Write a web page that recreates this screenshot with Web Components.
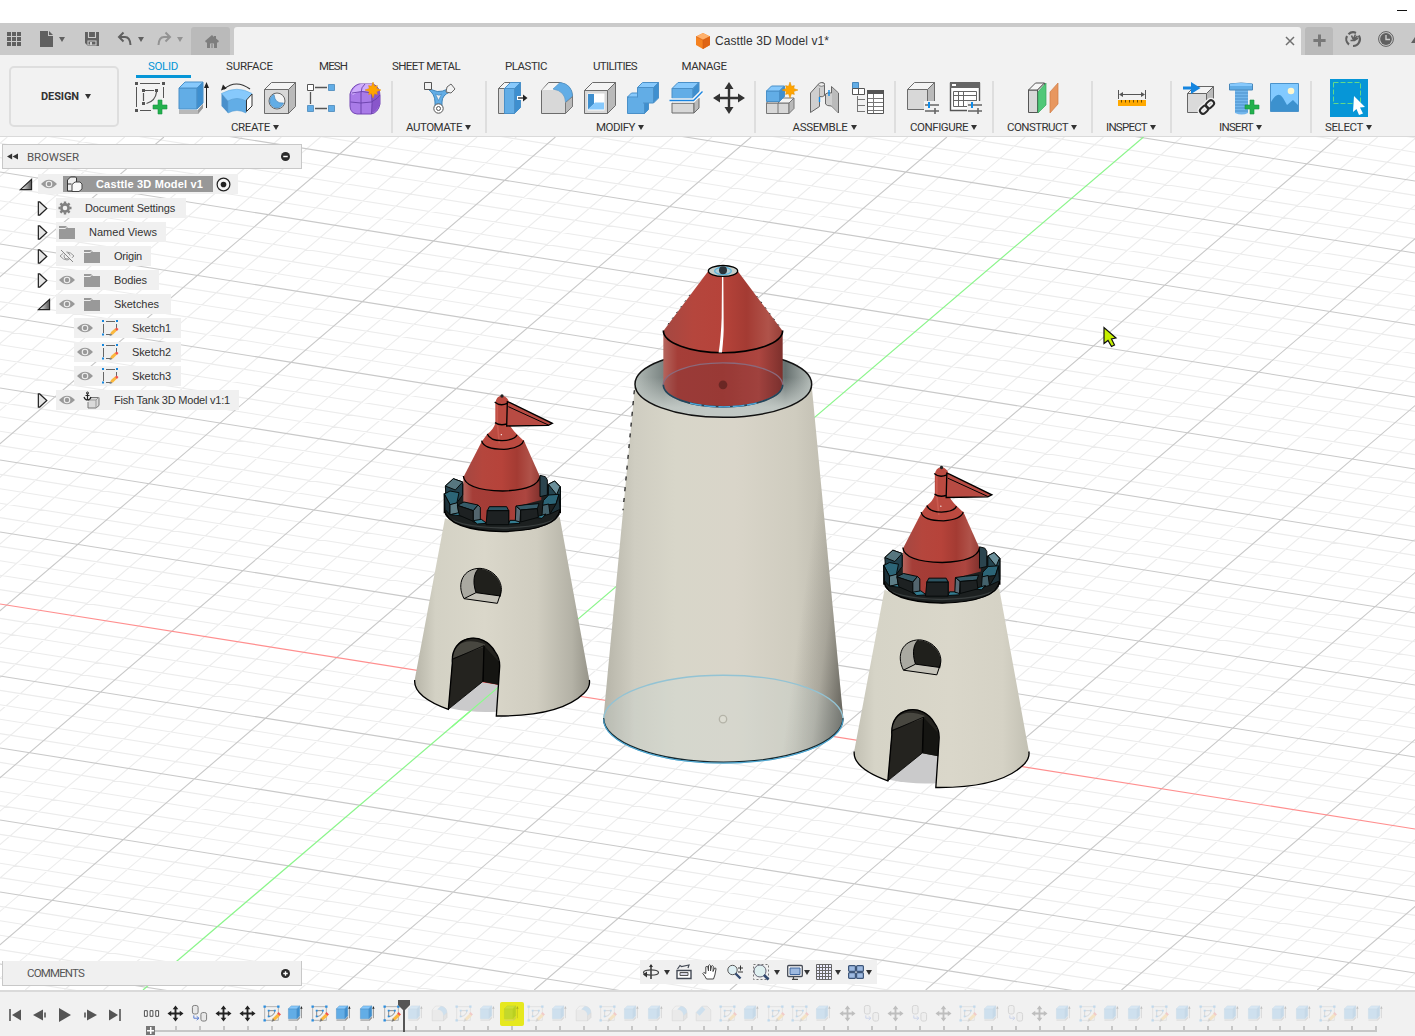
<!DOCTYPE html>
<html lang="en">
<head>
<meta charset="utf-8">
<title>Casttle 3D Model v1*</title>
<style>
html,body{margin:0;height:100%;overflow:hidden;background:#fff}
body{font-family:"Liberation Sans",Arial,sans-serif;font-size:11px;color:#333}
</style>
</head>
<body>
<cad-app></cad-app>
<script>
const cube = (x,y,w,h,d,f,t,s,o='none') => `<g stroke="${o}" stroke-linejoin="round"><path d="M${x} ${y+d}h${w-d}v${h-d}h${d-w}z" fill="${f}"/><path d="M${x} ${y+d}l${d} ${-d}h${w-d}l${-d} ${d}z" fill="${t}"/><path d="M${x+w-d} ${y+d}l${d} ${-d}v${h-d}l${-d} ${d}z" fill="${s}"/></g>`;
const plus = (x,y)=>`<path d="M${x-2} ${y-7}h4v5h5v4h-5v5h-4v-5h-5v-4h5z" fill="#23b14d" stroke="#149040" stroke-width=".6"/>`;
const star = (x,y,r)=>{let p='';for(let i=0;i<16;i++){const a=i*Math.PI/8,q=i%2?r*.5:(i%4?r*.78:r);p+=(x+q*Math.sin(a)).toFixed(1)+','+(y-q*Math.cos(a)).toFixed(1)+' ';}return `<polygon points="${p}" fill="#ffa400" stroke="#e08e00" stroke-width=".5"/>`;};
const sliders = (x,y)=>`<path d="M${x-1} ${y-4}h16v13h-16z" fill="#f2f2f2"/><path d="M${x} ${y}h14M${x} ${y+6}h14M${x+10} ${y+3}v6" stroke="#666" stroke-width="1.6"/><path d="M${x+4} ${y-3}v6" stroke="#0d8cea" stroke-width="2"/>`;
const move = `<path d="M18 2l4.500 7h-3.300v7.800H27v-3.300l7 4.500-7 4.500v-3.300h-7.800V27h3.300L18 34l-4.500-7h3.300v-7.800H9v3.300L2 18l7-4.500v3.300h7.800V9h-3.300z" fill="#333"/>`;
const ICONS = {
 sketch:`<path d="M7 3.500h20M3.500 7v20M7 30.500h11M30.500 7v11" stroke="#555" fill="none"/><g fill="#555"><path d="M2 2h3v3H2zM29 2h3v3h-3zM2 29h3v3H2zM9 9h3v3H9zM22 9h3v3h-3zM9 22h3v3H9z"/></g><path d="M12 10.500h9M10.500 13v8M23.500 12q-1 9-10 11.500" stroke="#555" stroke-width="1.200" fill="none"/>${plus(27,27)}`,
 extrude:`<path d="M3 30h19l5-6v4l-5 6H3z" fill="#b9b9b9"/><path d="M22 30l5-6v4l-5 6z" fill="#999"/>${cube(3,2,24,27,6,'#62ade6','#87c9fc','#3e8fcf','#4a90c8')}<path d="M30.500 7v21" stroke="#222"/><path d="M28 8l2.500-6 2.500 6z" fill="#222"/>`,
 revolve:`<path d="M2.500 13.500Q18 5 33 13.500l-6 7.500q-9-4-18 0z" fill="#87c9fc" stroke="#5fabe0" stroke-width=".6"/><path d="M2.500 13.500L9 21v12l-6.500-7z" fill="#4a90cb"/><path d="M9 21q9-5 18 0v12q-9-5-18 0z" fill="#62ade6" stroke="#5a9fd5" stroke-width=".6"/><path d="M27.500 20l5.500-6v12l-5.500 5.500z" fill="#fff" stroke="#333"/><path d="M5 9Q17-1 31 9" fill="none" stroke="#333" stroke-width="1.200"/><path d="M2 10.500l2-6 3.500 4z" fill="#222"/>`,
 hole:`${cube(2.5,2.5,31,31,7,'#d8d8d8','#f4f4f4','#bababa','#6c6c6c')}<circle cx="15" cy="21" r="8" fill="#f4f4f4" stroke="#666"/><path d="M12 14.500q1 9.500 9.500 8.500a7 7 0 1 1-9.500-8.500z" fill="#62ade6" stroke="#4887ba" stroke-width=".7"/>`,
 pattern:`<path d="M10 7.500h12M5.500 12v12M10 28.500h12" stroke="#555" stroke-width="1.300"/><path d="M2.500 4.500h6v6h-6z" fill="#fff" stroke="#555"/><path d="M23.500 4.500h6v6h-6zM2.500 25.500h6v6h-6zM23.500 25.500h6v6h-6z" fill="#62ade6" stroke="#4887ba" stroke-width=".8"/>`,
 form:`<path d="M2 14Q4 6 11 4h14q7 3 7 12v8q-2 9-9 10H9q-7-1-7-8z" fill="#a97be8" stroke="#7447b5"/><path d="M3 13q4-8 10-9h11q3 3-1 8-10-3-18 3z" fill="#cfadfc"/><path d="M24 15q6-4 8-5v14q-3 7-8 9z" fill="#8956cb"/><path d="M2.500 22q10 2 21 0 7-4 8.500-7M13 13v21M23.500 12q1 12 0 22M4 13q10-3 20 0M13 13q0-6 4-9" stroke="#6840a8" fill="none" stroke-width=".9"/>${star(25,10,8)}`,
 automate:`<path d="M8 7q7 8 19 2 2 1 2 3-8 3-8 10v7h-7v-7Q14 14 7 9z" fill="#62ade6" stroke="#3e83b8"/><path d="M14.500 14q4 2.500 6 0l-3 6.500z" fill="#f2f2f2" stroke="#3e83b8" stroke-width=".6"/><path d="M3.500 2.500h7v7h-7z" fill="#f2f2f2" stroke="#555"/><path d="M26 7l4-3 4 5-4 4-5-1z" fill="#f2f2f2" stroke="#666"/><circle cx="17.500" cy="28.500" r="4.700" fill="#fff" stroke="#555"/><circle cx="17.500" cy="28.500" r="2" fill="none" stroke="#555"/>`,
 presspull:`${cube(2.5,2.5,16,31,6,'#d8d8d8','#f4f4f4','#bababa','#6c6c6c')}${cube(8.5,2.5,16,31,6,'#62ade6','#87c9fc','#3e8fcf','#4a90c8')}<path d="M21 16h8v4h-8z" fill="#fff"/><path d="M22 18h8" stroke="#222" stroke-width="1.300"/><path d="M27 14.500l4.500 3.500-4.500 3.500z" fill="#222"/>`,
 fillet:`<path d="M2.500 10.500l7-8H21Q33 5 33.500 16v10.500l-7 7h-24z" fill="#d8d8d8" stroke="#6c6c6c"/><path d="M3 10l7-7h11l-7 7z" fill="#f4f4f4"/><path d="M26.500 22.500l7-6v10l-7 7z" fill="#bababa" stroke="#777"/><path d="M14 9l7-6.500Q33 4 33.500 16l-7 6Q26 11 14 9z" fill="#62ade6" stroke="#4a90c8" stroke-width=".6"/>`,
 chamfer:`<path d="M2.500 16L15 2.500h11l7.500 8v23h-31z" fill="#d8d8d8" stroke="#6c6c6c"/><path d="M2.500 16L15 2.500l7 7-12 13z" fill="#62ade6"/>`,
 shell:`${cube(2.5,2.5,31,31,8,'#d8d8d8','#f4f4f4','#bababa','#6c6c6c')}<path d="M5.500 13.500h17v17h-17z" fill="#fff"/><path d="M6 14h6v10l-6 5.500z" fill="#3e8fcf"/><path d="M6 29.500l7-7h9v7z" fill="#87c9fc"/>`,
 combine:`${cube(2.5,13,21,20.500,4,'#62ade6','#87c9fc','#3e8fcf','#4a90c8')}${cube(12.5,2.500,21,20.500,5,'#62ade6','#87c9fc','#3e8fcf','#4a90c8')}<path d="M4 17.500h14v14H4z" fill="#62ade6"/>`,
 split:`${cube(4,18,27,15,5,'#d8d8d8','#eee','#bababa','#6c6c6c')}${cube(4,2.500,27,16,6,'#62ade6','#87c9fc','#3e8fcf','#4a90c8')}<path d="M1.500 20.500h24l9-9" fill="none" stroke="#f8f8f8" stroke-width="4.500"/><path d="M1.500 20.500h24l9-9" fill="none" stroke="#1884e0" stroke-width="1.400"/>`,
 move,
 component:`${cube(2.5,19,16,14.500,4,'#d8d8d8','#f4f4f4','#bababa','#777')}${cube(14,18,16,15.500,5,'#d8d8d8','#f4f4f4','#bababa','#777')}${cube(2.500,6,18,15.500,5,'#62ade6','#87c9fc','#3e8fcf','#4a90c8')}${star(26,10,8)}`,
 joint:`<path d="M3.500 13l8-9q4-3 6-.5v12q-2 2-5 1v10l-9 6z" fill="#cfcfcf" stroke="#666"/><path d="M12.500 8v9" stroke="#888" stroke-width=".8"/><path d="M18.500 14q2-2 6-1V6.500l7 6.500v20l-7-7q-5 0-6-2z" fill="#cfcfcf" stroke="#666"/><path d="M25 7.500l6 6V32l-6-6z" fill="#bbb"/><path d="M12.500 17v5M22 10v6" stroke="#0d8cea" stroke-width="1.400"/><ellipse cx="14.500" cy="4.500" rx="3" ry="1.800" fill="#eee" stroke="#666" stroke-width=".8"/>`,
 bom:`<path d="M2.500 2.500h6v6h-6z" fill="#62ade6" stroke="#4887ba"/><path d="M2.500 8.500h6v6h-6zM8.500 8.500h6v6h-6z" fill="#fff" stroke="#555"/><path d="M7.500 16v16M8 19.500h7M8 25.500h7M8 31.500h7" stroke="#777" fill="none"/><path d="M17.500 10.500h16v23h-16z" fill="#fff" stroke="#555"/><path d="M17 10h17v4H17z" fill="#555"/><path d="M18 18.500h15M18 22.500h15M18 26.500h15M18 30.500h15M23.500 14v19" stroke="#777"/>`,
 config:`${cube(2.500,2.500,27,27,7,'#d8d8d8','#f4f4f4','#bababa','#6c6c6c')}${sliders(20,25)}`,
 configtable:`<path d="M2.500 3.500h29v27h-29z" fill="#fff" stroke="#555" stroke-width="1.400"/><path d="M2 2h30v6H2z" fill="#666"/><path d="M4 4h4v2H4z" fill="#fff"/><path d="M5.500 11.500h23v15h-23zM5.500 15.500h23M5.500 20.500h23M10.500 11.500v15M15.500 11.500v15" fill="none" stroke="#666"/>${sliders(20,25)}`,
 planes:`${cube(3.500,3,16,29.500,7,'#d8d8d8','#f6f6f6','#ddd','#555')}<path d="M13 12l8-9v22l-8 8z" fill="#50c878" stroke="#36a45c" stroke-width=".7"/><path d="M25 12l8-9v21l-8 9z" fill="#e8975f" stroke="#cf7d46" stroke-width=".7"/>`,
 ruler:`<path d="M4.500 10v9M31.500 10v9M6 14.500h24" stroke="#555"/><path d="M9 12l-4 2.500L9 17zM27 12l4 2.500-4 2.500z" fill="#555"/><path d="M4 20h28v6H4z" fill="#ffa900"/><path d="M7.500 20v2.500M11.500 20v2.500M15.500 20v2.500M19.500 20v2.500M23.500 20v2.500M27.500 20v2.500" stroke="#714b00"/>`,
 insertlink:`${cube(6.500,6.500,26,26,7,'#dadada','#f4f4f4','#bababa','#666')}<path d="M2 6.500h8V2l9.500 6L10 14V9.500H2z" fill="#1585df"/><g transform="rotate(-43 26 27)" fill="none" stroke="#f2f2f2" stroke-width="5"><rect x="17.500" y="24" width="9" height="6" rx="3"/><rect x="25.500" y="24" width="9" height="6" rx="3"/></g><g transform="rotate(-43 26 27)" fill="none" stroke="#2a2a2a" stroke-width="2"><rect x="17.500" y="24" width="9" height="6" rx="3"/><rect x="25.500" y="24" width="9" height="6" rx="3"/></g>`,
 bolt:`<path d="M11 10h13v23q-6 3-13 0z" fill="#72b6ec"/><path d="M5.500 4q12-2 23 0v6h-23z" fill="#62ade6" stroke="#4887ba"/><path d="M6 4q11-2 22 0v2H6z" fill="#87c9fc"/><path d="M11 13h13M11 16h13M11 19h13M11 22h13M11 25h13M11 28h13M11 31h13" stroke="#4a90cb"/>${plus(28,27)}`,
 picture:`<path d="M3.500 3.500h28v28h-28z" fill="#82caff" stroke="#4b93cb"/><path d="M4 22q7-12 12-4l4 7 6-5 5 5v6H4z" fill="#3c91ce"/><circle cx="24" cy="11" r="3.300" fill="#fff7cd"/>`,
 select:`<path d="M0 0h38v38H0z" fill="#0696d7"/><path d="M3.500 3.500h27v21h-27z" fill="none" stroke="#63d988" stroke-dasharray="5 2"/><path d="M24 17l11 11-5 .5 3 6-4 1.500-2.500-6-3.500 3z" fill="#fff"/>`,
 tsketch:`<path d="M3.500 3.500h29v29h-29z" fill="none" stroke="#999" stroke-width="1.500"/><path d="M12 12h13M12 12v12M25 12q0 10-13 13" fill="none" stroke="#777" stroke-width="1.800"/><g fill="#2a8ee0"><path d="M1 1h5v5H1zM30 1h5v5h-5zM1 30h5v5H1zM10 10h4v4h-4zM10 22h4v4h-4zM23 10h4v4h-4z"/></g><path d="M19 34l2-6 10-10 5 5-11 10z" fill="#fbb83e"/><path d="M30 18l3-3 5 5-3 3z" fill="#f2524a"/><path d="M18 36l3-8 4 5z" fill="#777"/>`,
 tmove:`<path d="M18 1l6 8h-4v7h7v-4l8 6-8 6v-4h-7v7h4l-6 8-6-8h4v-7H9v4l-8-6 8-6v4h7V9h-4z" fill="#222"/>`,
 tjoint:`<g fill="#e8e8e8" stroke="#777" stroke-width="2"><rect x="3" y="1" width="12" height="18" rx="4"/><rect x="21" y="16" width="12" height="18" rx="4"/></g><path d="M6 22v6h10M12 24l5 4-5 4" fill="none" stroke="#5578d0" stroke-width="2"/>`,
 tstart:`<path d="M3 12h6v12H3zM15 12h6v12h-6zM27 12h6v12h-6z" fill="#fff" stroke="#444" stroke-width="2"/>`,
 eye:`<path d="M0 8q8-8.500 16 0-8 8.500-16 0z" fill="#999"/><circle cx="8" cy="8" r="3.300" fill="#f0f0f0"/><circle cx="8" cy="8" r="2.200" fill="#999"/>`,
 eyeoff:`<path d="M1 8q7-8 14 0-7 8-14 0z" fill="none" stroke="#999"/><circle cx="8" cy="8" r="3" fill="none" stroke="#999"/><path d="M3 2l11 11" stroke="#f0f0f0" stroke-width="3"/><path d="M2 2l12 12" stroke="#888"/>`,
 folder:`<path d="M0 2h7l2 2h7v11H0z" fill="#999"/><path d="M0 4.500h6l1.500-1" stroke="#f0f0f0" fill="none"/>`,
 gear:`<circle cx="8" cy="8" r="3.600" fill="none" stroke="#808080" stroke-width="2.600"/><g stroke="#808080" stroke-width="2.400"><path d="M8 1.500v2M8 12.500v2M1.500 8h2M12.500 8h2M3.400 3.400l1.500 1.500M11.100 11.100l1.500 1.500M12.600 3.400l-1.500 1.500M4.900 11.100l-1.500 1.500"/></g>`,
 bodies:`<path d="M1.500 4l3-3h5l1 1v13h-9z" fill="#eee" stroke="#333"/><path d="M6 8.500l3-2.500h5l2 2v5l-3 2.500H6z" fill="#f8f8f8" stroke="#444"/><path d="M1.500 8h4" stroke="#333"/>`,
 anchor:`<path d="M6 5.500h9v8l-3 2.500H4V10" fill="#dadada" stroke="#777"/><path d="M4 8h8v8M12 8l3-3" stroke="#999" fill="none"/><circle cx="3.500" cy="1" r="1" fill="none" stroke="#222"/><path d="M3.500 1.500v6.500M1.500 3.500h4M0 5q1 3 3.500 3t3.500-3" stroke="#222" fill="none" stroke-width="1.200"/>`,
 skrow:`<path d="M4 1.500h9M1.500 4v9M14.500 4v4M4 14.500h4" stroke="#666" fill="none"/><path d="M0 0h2v2H0zM14 0h2v2h-2zM0 13.500h2v2H0z" fill="#1686dd"/><path d="M8 15l1-3 4-3.500 2 2-4 4z" fill="#fbb83e"/><path d="M13 9l1.500-1.500 2 1.500-1.500 2z" fill="#f2524a"/><path d="M7.500 16l1-2.500 2 1.500z" fill="#777"/>`,
 home:`<path d="M1 8l7-6 2 2V3h2v2.500L15 8l-1 1.500h-1V15h-3v-4.500H6V15H3V9.500H2z" fill="#7e7e7e"/><path d="M7 11h2v4H7z" fill="#9a9a9a"/>`,
 grid:`<path d="M1 1h4v4H1zM6 1h4v4H6zM11 1h4v4h-4zM1 6h4v4H1zM6 6h4v4H6zM11 6h4v4h-4zM1 11h4v4H1zM6 11h4v4H6zM11 11h4v4h-4z" fill="#606060"/>`,
 file:`<path d="M1 0h8v5h5v11H1z" fill="#606060"/><path d="M10 0l4 4h-4z" fill="#606060"/>`,
 save:`<path d="M1 1h14v14H4l-3-3z" fill="#606060"/><path d="M4.500 1v5.500h7V1" fill="none" stroke="#ccc" stroke-width="1.100"/><path d="M4 10h8v4H4z" fill="none" stroke="#ccc" stroke-width="1.100"/><path d="M6 11h2v3H6z" fill="#ccc"/>`,
 undo:`<path d="M2 6h6q5 0 5.500 8" fill="none" stroke="#606060" stroke-width="2"/><path d="M6.500 1.500L2 6l4.500 4.500" fill="none" stroke="#606060" stroke-width="2"/>`,
 redo:`<path d="M14 6H8q-5 0-5.500 8" fill="none" stroke="#939393" stroke-width="2"/><path d="M9.500 1.500L14 6l-4.500 4.500" fill="none" stroke="#939393" stroke-width="2"/>`,
 orange:`<path d="M8 0l7 3.500v8.500L8 16 1 12V3.500z" fill="#f58220"/><path d="M8 0l7 3.500L8 7 1 3.500z" fill="#ffb16c"/><path d="M8 7l7-3.500V12l-7 4z" fill="#df6414"/><path d="M1 3.500L8 7l7-3.500M8 7v9" stroke="#d15b12" fill="none" stroke-width=".6"/>`,
 job:`<path d="M4 13.500A6.800 6.800 0 0 1 2 5M3.500 3.200A6.800 6.800 0 0 1 11 1.900M13.800 4.500A6.800 6.800 0 0 1 8 15" fill="none" stroke="#606060" stroke-width="2.200"/><path d="M8 8l-1.500-3.500M8 8.500l2.500-5M8 9l4.500-4M5.500 9.500h4L13 7" stroke="#606060" stroke-width="1.600" fill="none"/>`,
 clock:`<circle cx="8" cy="8" r="7.400" fill="none" stroke="#606060" stroke-width="1"/><circle cx="8" cy="8" r="5.900" fill="#606060"/><path d="M8 4v4.500h4" fill="none" stroke="#ccc" stroke-width="1.400"/>`,
 orbit:`<path d="M8 1v14" stroke="#333" stroke-width="1.500"/><ellipse cx="8" cy="8.500" rx="7.500" ry="2.700" fill="none" stroke="#444" stroke-width="1.200"/><path d="M8 0l2 3H6zM4 7.500v6l-4-3z" fill="#333"/>`,
 lookat:`<path d="M1 6.500h14v8H1z" fill="#fff" stroke="#444a55" stroke-width="1.400"/><path d="M4 8.500h8v3H4z" fill="#d8d8e3" stroke="#555"/><path d="M1.500 5l2.500-3.500 1.500 1L13 1l-1 3" fill="none" stroke="#444a55" stroke-width="1.200"/>`,
 pan:`<path d="M4.500 15Q3 12 .8 9.500q.5-2 3 0V3q1-2 2 0L6.500 7V1.500q1-1.500 2 0V7l1-5q1.200-1 1.800.3L11 7.500l1.500-3.500q1.500-.5 1.500 1Q13 12 11.500 15z" fill="#fff" stroke="#444" stroke-width="1"/>`,
 zoomio:`<circle cx="5.500" cy="6" r="4.700" fill="#dff0f4" stroke="#555"/><path d="M8.500 9.500l5 5" stroke="#334a70" stroke-width="2.400"/><path d="M11 4h5M13.500 1.500v5M11 8h5" stroke="#333"/>`,
 fit:`<path d="M.5.500h15v15H.5z" fill="none" stroke="#777" stroke-dasharray="2 2"/><circle cx="7" cy="7" r="6" fill="#dff0f0" stroke="#667"/><path d="M11 11l4.500 4.500" stroke="#334a70" stroke-width="2.600"/>`,
 display:`<rect x=".7" y="1.500" width="14.600" height="11" rx="1" fill="#fff" stroke="#444a55" stroke-width="1.300"/><path d="M3 4h10v6.500H3z" fill="#9db9e0" stroke="#3f659c"/><path d="M5 15.300h6M6.500 13v2" stroke="#444" stroke-width="1.200"/>`,
 mesh:`<path d="M.5.500h15v15H.5zM3.500 0v16M6.500 0v16M9.500 0v16M12.500 0v16M0 3.500h16M0 6.500h16M0 9.500h16M0 12.500h16" fill="#eef" stroke="#666"/>`,
 views:`<g fill="#9db9e0" stroke="#3e5679" stroke-width="1.200"><rect x=".6" y="1.600" width="6.800" height="5.800" rx="1"/><rect x="8.600" y="1.600" width="6.800" height="5.800" rx="1"/><rect x=".6" y="8.600" width="6.800" height="5.800" rx="1"/><rect x="8.600" y="8.600" width="6.800" height="5.800" rx="1"/></g>`,
 first:`<path d="M3 2v12" stroke="#555" stroke-width="1.600"/><path d="M14 2.500v11L5 8z" fill="#555"/>`,
 prev:`<path d="M11 2.500v11L1 8z" fill="#555"/><path d="M13 5.500v5" stroke="#555" stroke-width="1.600"/>`,
 play:`<path d="M2 1l12 7-12 7z" fill="#555"/>`,
 next:`<path d="M5 2.500v11L15 8z" fill="#555"/><path d="M3 5.500v5" stroke="#555" stroke-width="1.600"/>`,
 last:`<path d="M13 2v12" stroke="#555" stroke-width="1.600"/><path d="M2 2.500v11L11 8z" fill="#555"/>`,
 minus:`<circle cx="8" cy="8" r="8" fill="#2a2a2a"/><path d="M4 8h8" stroke="#fff" stroke-width="2.600"/>`,
 add:`<circle cx="8" cy="8" r="8" fill="#2a2a2a"/><path d="M4 8h8M8 4v8" stroke="#fff" stroke-width="2.400"/>`,
 radio:`<circle cx="8" cy="8" r="6.800" fill="#f7f7f7" stroke="#222" stroke-width="1.300"/><circle cx="8" cy="8" r="3" fill="#222"/>`,
 close:`<path d="M4 4l8 8M12 4l-8 8" stroke="#707070" stroke-width="1.500"/>`,
 bigplus:`<path d="M8 1.500v13M1.500 8h13" stroke="#787878" stroke-width="3.200"/>`,
 rewind:`<path d="M7.500 3.500v9L0 8zM16 3.500v9L8 8z" fill="#333"/>`,
 open:`<linearGradient id="tg" x1="0" x2="1"><stop offset=".2" stop-color="#ddd"/><stop offset="1" stop-color="#555"/></linearGradient><path d="M14.500 2.500v11H2.500z" fill="url(#tg)" stroke="#222" stroke-width="1.200"/>`,
 closed:`<path d="M2.500 1v14h1.500l7.500-7L4 1z" fill="#e6e6e6" stroke="#222" stroke-width="1.300"/>`
};
const BIG = new Set(['sketch','extrude','revolve','hole','pattern','form','automate','presspull','fillet','chamfer','shell','combine','split','move','component','joint','bom','config','configtable','planes','ruler','insertlink','bolt','picture','tsketch','tjoint','tstart','tmove']);

class Base extends HTMLElement{
  connectedCallback(){ if(this.shadowRoot) return; this.attachShadow({mode:'open'}).innerHTML=this.render(); this.ready&&this.ready(); }
  a(n,d=''){return this.getAttribute(n)??d;}
}
const def=(n,c)=>customElements.define(n,c);

def('cad-icon',class extends Base{render(){
  const n=this.a('name'),s=+this.a('size','16'),v=n==='select'?38:BIG.has(n)?36:16;
  return `<style>:host{display:block;flex:none;width:${s}px;height:${s}px}svg{display:block;overflow:visible}</style><svg width="${s}" height="${s}" viewBox="0 0 ${v} ${v}" fill="none">${ICONS[n]}</svg>`;}});

/* A one-line label whose letter spacing is tuned to a given advance width. */
def('cad-label',class extends Base{render(){
  return `<style>:host{display:inline-block;flex:none;white-space:nowrap;width:${this.a('w')}px}span{display:inline-block}</style><span>${this.a('text')}</span>`;}
  ready(){const s=this.shadowRoot.querySelector('span'),w=+this.a('w');s.style.letterSpacing=((w-s.getBoundingClientRect().width)/this.a('text').length).toFixed(3)+'px';}});

def('cad-caret',class extends Base{render(){return `<style>:host{display:block;flex:none;width:0;height:0;border:3px solid transparent;border-top:5px solid ${this.a('color','#333')};border-bottom:0}</style>`;}});

def('cad-titlebar',class extends Base{render(){return `<style>
:host{display:block;flex:none}.win{height:23px;background:#fff;display:flex;justify-content:flex-end;align-items:center}.win i{width:10px;height:1px;background:#111;margin:-2px 8px 0 0}
.bar{height:32px;background:#cacaca;display:flex;overflow:hidden}.quick{width:191px;display:flex;align-items:center;padding-left:6px;box-sizing:border-box}
.home{width:39px;margin:4px 4px 0 0;background:#bababa;border-radius:3px 3px 0 0;display:flex;justify-content:center;align-items:center;box-sizing:border-box;padding:0 0 1px 3px}
.doc{width:1067px;margin-top:4px;background:#f2f2f2;border-radius:3px 3px 0 0;display:flex;align-items:center;box-sizing:border-box;padding:0 3px 0 461px;font-size:12px}
.doc .s{flex:1}.new{width:28px;background:#bababa;margin:4px 12px 0 4px;border-radius:3px 3px 0 0;display:flex;align-items:center;justify-content:center;box-sizing:border-box;padding-bottom:1px}
.bell{width:0;height:0;border-left:4px solid transparent;border-bottom:6px solid #606060;margin:14px 0 0 17px}</style>
<div class="win"><i></i></div><div class="bar"><div class="quick"><cad-icon name="grid"></cad-icon><cad-icon name="file" style="margin-left:17px"></cad-icon><cad-caret style="margin-left:4px" color="#606060"></cad-caret><cad-icon name="save" style="margin-left:19px"></cad-icon><cad-icon name="undo" style="margin-left:17px"></cad-icon><cad-caret color="#606060" style="margin-left:5px"></cad-caret><cad-icon name="redo" style="margin-left:12px"></cad-icon><cad-caret color="#939393" style="margin-left:5px"></cad-caret></div>
<div class="home"><cad-icon name="home"></cad-icon></div><div class="doc"><cad-icon name="orange"></cad-icon><cad-label text="Casttle 3D Model v1*" w="114" style="margin-left:4px"></cad-label><span class="s"></span><cad-icon name="close"></cad-icon></div><div class="new"><cad-icon name="bigplus" size="15"></cad-icon></div><cad-icon name="job" style="margin-top:8px"></cad-icon><cad-icon name="clock" style="margin:8px 0 0 17px"></cad-icon><i class="bell"></i></div>`;}});

def('ribbon-tab',class extends Base{render(){const on=this.hasAttribute('active');return `<style>:host{display:flex;flex-direction:column;align-items:center;flex:none;width:${this.a('span')}px;height:23px;color:${on?'#0696d7':'#333'}}cad-label{line-height:14px;margin-top:4px}i{height:3px;width:55px;background:#0696d7;margin-top:2px}</style><cad-label text="${this.a('text')}" w="${this.a('w')}"></cad-label>${on?'<i></i>':''}`;}});

def('ribbon-group',class extends Base{render(){return `<style>:host{display:flex;flex-direction:column;flex:none;box-sizing:border-box;width:${this.a('span')}px;border-right:${this.hasAttribute('last')?0:2}px solid #dedede;height:52px}
.icons{display:flex;flex:none;gap:7px;height:38px;justify-content:center;align-items:center;position:relative;left:${this.a('shift','0')}px;top:-2px}.lab{display:flex;flex:none;align-items:center;justify-content:center;gap:3px;height:14px;margin-top:1px;margin-left:-1px}</style>
<div class="icons">${this.a('icons').split(' ').map(i=>`<cad-icon name="${i}" size="${i==='select'?38:36}"></cad-icon>`).join('')}</div><div class="lab"><cad-label text="${this.a('text')}" w="${this.a('w')}"></cad-label><cad-caret></cad-caret></div>`;}});

def('cad-ribbon',class extends Base{render(){
 const tabs=[['SOLID',30,86,1],['SURFACE',47,87],['MESH',28,80],['SHEET METAL',68,106],['PLASTIC',42,94],['UTILITIES',44,84],['MANAGE',45,94]];
 const g=[['CREATE',39,273,'sketch extrude revolve hole pattern form',3],['AUTOMATE',56,94,'automate',0],['MODIFY',39,269,'presspull fillet shell combine split move',1],['ASSEMBLE',55,140,'component joint bom',0],['CONFIGURE',58,98,'config configtable',0],['CONSTRUCT',61,99,'planes',0],['INSPECT',41,79,'ruler',0],['INSERT',34,140,'insertlink bolt picture',1],['SELECT',38,74,'select',0]];
 return `<style>:host{display:flex;flex:none;height:82px;box-sizing:border-box;border-bottom:1px solid #dadada;background:#f2f2f2;font-family:Roboto,sans-serif;font-size:11.500px;color:#333}
.design{width:110px;height:61px;box-sizing:border-box;border:2px solid #dedede;border-radius:5px;margin:11px 0 0 9px;padding-left:4px;display:flex;align-items:center;justify-content:center;gap:6px;font-weight:700;font-size:11px}
.main{display:flex;flex-direction:column;margin-left:1px}.tabs{display:flex;height:26px}.groups{display:flex}</style>
<div class="design"><cad-label text="DESIGN" w="38"></cad-label><cad-caret></cad-caret></div><div class="main"><div class="tabs">${tabs.map(t=>`<ribbon-tab text="${t[0]}" w="${t[1]}" span="${t[2]}" ${t[3]?'active':''}></ribbon-tab>`).join('')}</div><div class="groups">${g.map((t,i)=>`<ribbon-group text="${t[0]}" w="${t[1]}" span="${t[2]}" icons="${t[3]}" shift="${t[4]}" ${i===8?'last':''}></ribbon-group>`).join('')}</div></div>`;}});

def('tree-row',class extends Base{render(){const hot=this.hasAttribute('root'),ic=this.a('icon'),tw=this.a('twist'),eye=this.a('eye');return `<style>:host{display:flex;height:24px;align-items:center;padding-left:${this.a('indent')}px}.tw{width:18px;display:flex;flex:none;box-sizing:border-box;padding-left:${tw==='closed'?-0:0}px}.tw cad-icon{margin-left:${tw==='closed'?-2:-2}px}
.row{display:flex;align-items:center;height:20px;background:#f0f0f0;box-sizing:border-box;padding-left:${ic==='gear'?1:3}px;width:${this.a('span')}px}.pill{display:flex;align-items:center;height:16px;${hot?'background:#989898;color:#fff;font-weight:700;margin-left:6px;padding-left:3px;width:147px;margin-right:3px':'margin-left:'+(eye?9:0)+'px'}}.pill cad-label{margin-left:${this.a('gap')}px}</style>
<span class="tw">${tw?`<cad-icon name="${tw}" size="15"></cad-icon>`:''}</span><div class="row">${eye?`<cad-icon name="${eye}" size="16"></cad-icon>`:''}<div class="pill"><cad-icon name="${ic}" size="16"></cad-icon><cad-label text="${this.a('text')}" w="${this.a('w')}"></cad-label></div>${hot?'<cad-icon name="radio" size="15"></cad-icon>':''}</div>`;}});

def('cad-panel',class extends Base{render(){const b=this.hasAttribute('bottom');return `<style>:host{display:block;width:300px}.h{height:${b?24:23}px;border:1px solid #c8c8c8;${b?'border-top:0;':''}background:#f0f0f0;display:flex;align-items:center;width:298px;color:#555}.h>span{width:20px;padding-left:4px;flex:none}.h cad-label{font:11.500px Roboto,sans-serif}.s{flex:1}.h cad-icon[size="9"]{margin-right:11px}</style><div class="h"><span>${b?'':'<cad-icon name="rewind" size="11"></cad-icon>'}</span><cad-label text="${this.a('text')}" w="${this.a('w')}"></cad-label><i class="s"></i><cad-icon name="${b?'add':'minus'}" size="9"></cad-icon></div><slot></slot>`;}});

def('cad-navbar',class extends Base{render(){const i=[['orbit',3,5],['lookat',6],['pan',10],['zoomio',9],['fit',10,5],['display',7,1],['mesh',6,3],['views',7,2]];return `<style>:host{display:flex;width:237px;height:24px;background:#f0f0f0;align-items:center}</style>${i.map(t=>`<cad-icon name="${t[0]}" size="16" style="margin-left:${t[1]}px"></cad-icon>${t[2]?`<cad-caret style="margin-left:${t[2]}px"></cad-caret>`:''}`).join('')}`;}});

def('cad-timeline',class extends Base{render(){
 const k={e:'extrude',s:'tsketch',m:'tmove',j:'tjoint',f:'fillet',c:'chamfer',Y:'extrude',o:'tstart'};
 const done='omjmmsesees', pending='efseYsefseefcsessemjmjmsejmeseeseseeeesee';
 const item=(c,cls)=>`<div class="it ${cls}"><div class="ic"><cad-icon name="${k[c]}" size="17"></cad-icon></div></div>`;
 return `<style>:host{display:flex;flex:none;height:46px;box-sizing:border-box;border-top:2px solid #dadada;background:#f1f1f1}.play{display:flex;width:140px;padding:15px 0 0 7px;box-sizing:border-box;gap:9px}
.t{display:flex;position:relative;padding-top:10px}.it{width:24px;height:32px;display:flex;flex-direction:column;align-items:center;flex:none;box-sizing:border-box}.ic{width:24px;height:24px;display:flex;align-items:center;justify-content:center;border-radius:2px;box-sizing:border-box;padding:0 1px 1px 0}.fade cad-icon{opacity:.24}.y .ic{background:#e6e81e}.y cad-icon{opacity:.3;filter:hue-rotate(-110deg)}
.it::after{content:"";width:2px;height:5px;background:#c6c6c6}.it:first-child::after{visibility:hidden}.line{position:absolute;left:15px;right:11px;top:38px;height:2px;background:#c6c6c6}
.exp{position:absolute;left:6px;top:34px;width:9px;height:9px;background:linear-gradient(#fff,#fff) center/7px 1.500px no-repeat,linear-gradient(#fff,#fff) center/1.500px 7px no-repeat,#777}
.mark{position:absolute;left:258px;top:8px}</style>
<div class="play">${['first','prev','play','next','last'].map(n=>`<cad-icon name="${n}" size="16"></cad-icon>`).join('')}</div><div class="t">${[...done].map(c=>item(c,'')).join('')}${[...pending].map(c=>item(c,c==='Y'?'y':'fade')).join('')}<i class="line"></i><i class="exp"></i><svg class="mark" width="12" height="32"><path d="M0 0h12v5L7 10v22H5V10L0 5z" fill="#555"/></svg></div>`;}});

/* Modelling viewport: ground grid, towers, pointer. */
def('cad-scene',class extends Base{render(){
 const W=1415,T=137,B=990;let mi='',ma='';
 const gs=.853,rs=.159;
 for(let n=-60;n<60;n++){ if(!n)continue;
  const c=604+n*14.4, s=`M0 ${c.toFixed(1)}L${W} ${(c+rs*W).toFixed(1)}`; if(n%5)mi+=s;else ma+=s;
  const k=1111.7+n*33*(gs+rs), t=`M${((k-T)/gs).toFixed(1)} ${T}L${((k-B)/gs).toFixed(1)} ${B}`; if(n%5)mi+=t;else ma+=t; }
 const p=(d,f)=>`<path d="${d}" fill="${f}"/>`;
 const battlements=`<g stroke="#060a0a" stroke-width="3" stroke-linejoin="round">
 ${p('M420 286L436 290 442 300V345L420 350Z','#2b444e')}${p('M136 318L160 296 188 306V345L168 372 138 350Z','#23414d')}${p('M136 318L160 296 188 306 166 330Z','#57767f')}${p('M445 313L464 303 481 320V385L445 350Z','#24444f')}${p('M445 313L464 303 480 320 470 344Z','#6b909b')}
 ${p('M133 342L150 333 177 338 170 372 150 374Z','#2c6577')}${p('M133 342L150 374V404L135 388Z','#1b3039')}${p('M150 374L172 368 176 400 150 404Z','#5d7d86')}
 ${p('M430 362L446 345 477 343 468 372 428 376Z','#2c6577')}${p('M477 343L468 372 450 402 480 388Z','#1d323a')}${p('M428 376L446 372 450 402 426 408Z','#44626c')}${p('M404 412L438 402 426 415Z','#347c90')}${p('M152 404L176 398 186 408Z','#347c90')}
 ${p('M172 376L192 366 234 375 220 392Z','#355a67')}${p('M172 376L220 392V424L178 406Z','#1d2122')}${p('M220 392L234 375 241 382V426H220Z','#53656e')}${p('M220 422L244 418 260 430 232 432Z','#347c90')}
 ${p('M262 392L268 380H320L326 392Z','#2c5563')}${p('M262 392H326V434H258Z','#1d2122')}${p('M326 432L330 421H356L360 430Z','#347c90')}
 ${p('M348 378L362 390 360 426 346 422Z','#5b6b76')}${p('M348 378L378 374 417 371 412 386 362 390Z','#355a67')}${p('M362 390L412 386 415 412 362 426Z','#1d2122')}</g>`;
 const tower=(shade,axes)=>`
 <path d="M150 985L250 905l50 10-8 80q-70 5-142-10z" fill="#cacacb"/>${axes?'<path d="M240 904l54 9" stroke="#d22" stroke-width="3"/><path d="M155 1041L297 920" stroke="#8f8" stroke-width="3.500"/>':''}
 <path d="M135 415L43 905Q42 950 145 988L155 850C150 765 250 750 285 815Q300 835 299 860L289 1008Q480 1010 552 940Q572 920 568 900L479 410Q310 490 135 415Z" fill="url(#${shade})"/>
 <path d="M145 988L157 835C160 765 250 750 285 815Q299 835 298 860L296 914 248 905Z" fill="#24231f"/><path d="M157 835C160 790 200 770 255 793L253 800Z" fill="#484740"/><path d="M252 797l46 50-2 67-46-9z" fill="#151512"/>
 <path d="M145 988L248 905 252 797 157 838M252 797L250 905" fill="none" stroke="#000" stroke-width="2.500"/>
 <path d="M44 900Q40 950 145 988L157 850C150 765 250 750 285 815Q300 835 299 860L289 1008Q480 1010 552 940Q572 920 568 900" fill="none" stroke="#000" stroke-width="4"/>
 <path d="M192 656C168 610 190 565 240 565C285 568 312 610 302 640L292 670Z" fill="#aaa9a1"/><path d="M228 638C215 600 225 575 236 566C285 568 312 610 302 650Z" fill="#20201c"/><path d="M192 656L228 638 301 648 292 670Z" fill="#c5c3b9"/>
 <path d="M192 656C168 610 190 565 240 565C285 568 312 610 302 640L292 670ZM192 656L228 638 301 648M228 638C215 600 225 575 236 566" fill="none" stroke="#000" stroke-width="3"/>
 <path d="M133 345Q140 310 200 310H410Q475 310 481 345V395Q470 450 308 455Q150 450 133 395Z" fill="#1c2020"/><path d="M136 402Q155 440 308 444Q460 440 478 402" stroke="#3a3f3f" stroke-width="4" fill="none"/>
 <path d="M190 290V365L240 380V425H260V390H328V422H346V380L424 360V290Z" fill="url(#redcyl)"/>
 <path d="M245 185L190 292Q200 332 308 333Q415 330 420 290L371 180Z" fill="url(#redcone)"/>
 <path d="M286 70V130Q280 150 262 162L245 185Q260 210 312 208Q365 204 371 182L350 162Q332 145 328 130V70Q325 50 306 47Q288 48 286 70Z" fill="#bb4a40"/>
 <path d="M292 70v60l6 60" stroke="#db6a5e" stroke-width="5" fill="none" opacity=".5"/><circle cx="304" cy="164" r="2" fill="#fff"/>
 <path d="M322 65L320 138 445 136 457 130 330 68Z" fill="#b84b43" stroke="#000" stroke-width="4"/><path d="M325 80L445 135" stroke="#000" stroke-width="3"/>
 <g fill="none" stroke="#000" stroke-width="4"><path d="M284 66Q300 80 322 70M285 128Q300 138 320 132M262 162Q270 182 306 182Q345 180 351 164M245 182Q250 208 312 208Q365 204 371 182M190 288Q194 330 308 333Q412 330 420 290M133 390Q145 450 308 455Q470 450 480 390M133 340V400M481 320V400"/></g><circle cx="306" cy="48" r="5" fill="#222"/>${battlements}`;
 return `<style>:host{display:block;width:100%;height:100%}svg{display:block}</style><svg width="1415" height="853" viewBox="0 137 1415 853"><defs>
 <linearGradient id="s1"><stop offset="0" stop-color="#b7b5a8"/><stop offset=".12" stop-color="#d3d1c4"/><stop offset=".4" stop-color="#dad7ca"/><stop offset=".7" stop-color="#d0cdc0"/><stop offset=".9" stop-color="#b4b2a6"/><stop offset="1" stop-color="#969489"/></linearGradient>
 <linearGradient id="s2"><stop offset="0" stop-color="#c2c0b3"/><stop offset=".12" stop-color="#d6d4c7"/><stop offset=".55" stop-color="#dad7ca"/><stop offset=".85" stop-color="#d5d2c5"/><stop offset="1" stop-color="#c2c0b3"/></linearGradient>
 <linearGradient id="s3"><stop offset="0" stop-color="#b6b4a8"/><stop offset=".13" stop-color="#cfcdc1"/><stop offset=".3" stop-color="#d8d6c9"/><stop offset=".55" stop-color="#d9d5c9"/><stop offset=".8" stop-color="#cfccbf"/><stop offset="1" stop-color="#b8b5a9"/></linearGradient>
 <linearGradient id="s3d" gradientUnits="userSpaceOnUse" x1="590" y1="1388" x2="756" y2="1411"><stop offset="0" stop-color="#44423c" stop-opacity="0"/><stop offset=".5" stop-color="#44423c" stop-opacity=".2"/><stop offset="1" stop-color="#3a3934" stop-opacity=".68"/></linearGradient>
 <linearGradient id="redcyl"><stop offset="0" stop-color="#b5655d"/><stop offset=".12" stop-color="#a53e38"/><stop offset=".5" stop-color="#a43b35"/><stop offset=".8" stop-color="#ad4640"/><stop offset="1" stop-color="#7d302c"/></linearGradient>
 <linearGradient id="redcone"><stop offset="0" stop-color="#a44842"/><stop offset=".25" stop-color="#b5463d"/><stop offset=".5" stop-color="#b6433a"/><stop offset=".7" stop-color="#a43b33"/><stop offset=".88" stop-color="#b0534a"/><stop offset="1" stop-color="#963f38"/></linearGradient>
 <linearGradient id="ring"><stop offset="0" stop-color="#b2bab6"/><stop offset=".16" stop-color="#7b8583"/><stop offset=".42" stop-color="#aeb7b3"/><stop offset=".7" stop-color="#a4adaa"/><stop offset=".85" stop-color="#66706f"/><stop offset="1" stop-color="#b2bab6"/></linearGradient>
 <linearGradient id="ringb" x1="0" y1="0" x2="0" y2="1"><stop offset=".4" stop-color="#c2c9c5" stop-opacity="0"/><stop offset=".85" stop-color="#c2c9c5" stop-opacity=".95"/></linearGradient></defs>
 <rect y="137" width="1415" height="853" fill="#fff"/><path d="${mi}" stroke="#ececec" stroke-width="1.100"/><path d="${ma}" stroke="#c9c9c9" stroke-width="1.100"/>
 <path d="M0 604L1415 829" stroke="#ff8f8f" stroke-width="1.200"/><path d="M1143.500 137L143 990" stroke="#8bf58b" stroke-width="1.200"/>
 <g transform="translate(400 380) scale(.33333)">${tower('s1',true)}</g>
 <g transform="translate(590 250) scale(.33333 .338)">
 <path d="M135 400L40 1388A360 131 0 0 0 760 1388L665 400Z" fill="url(#s3)"/><path d="M135 400L40 1388A360 131 0 0 0 760 1388L665 400Z" fill="url(#s3d)"/>
 <ellipse cx="400" cy="1388" rx="359" ry="130" fill="#c8dde6" fill-opacity=".16" stroke="#93c3d4" stroke-width="4"/>
 <path d="M41 1385A359 130 0 0 0 759 1385" fill="none" stroke="#15282f" stroke-width="4"/><path d="M41 1388A359 130 0 0 0 759 1388" fill="none" stroke="#4aa5d2" stroke-width="3"/>
 <circle cx="399" cy="1388" r="11" fill="#dcdcd2" stroke="#b4b3a8" stroke-width="4"/>
 <ellipse cx="400" cy="397" rx="265" ry="98" fill="url(#ring)"/><ellipse cx="400" cy="397" rx="265" ry="98" fill="url(#ringb)" stroke="#111" stroke-width="4.500"/>
 <path d="M220 240V399A179 65 0 0 0 578 399V240Z" fill="url(#redcyl)"/><ellipse cx="399" cy="399" rx="179" ry="65" fill="#703038" fill-opacity=".2" stroke="#8b6a7c" stroke-width="4"/><path d="M220 399A179 65 0 0 0 578 399" fill="none" stroke="#21475b" stroke-width="5"/><path d="M300 453Q400 475 500 453" fill="none" stroke="#4faade" stroke-width="4" stroke-dasharray="35 8"/><circle cx="399" cy="399" r="13" fill="#6b2724"/>
 <path d="M355 62L220 240A179 66 0 0 0 578 240L443 62Z" fill="url(#redcone)"/><path d="M220 238A179 66 0 0 0 578 238" fill="none" stroke="#000" stroke-width="5"/><path d="M396 78L395 200Q393 260 386 303H396Q402 250 401 220L400 78Z" fill="#fff"/>
 <path d="M300 132L228 228M500 136L570 228" stroke="#111" stroke-width="2.500" stroke-dasharray="5 16"/><path d="M133 415L99 770" stroke="#111" stroke-width="3.500" stroke-dasharray="12 20"/>
 <ellipse cx="399" cy="62" rx="44" ry="16" fill="#c6cdc8" stroke="#000" stroke-width="4"/><ellipse cx="399" cy="62" rx="25" ry="11" fill="#b3cbd2" stroke="#5eb4db" stroke-width="4"/><circle cx="399" cy="60" r="12" fill="#29333a"/></g>
 <g transform="translate(839.500 451.500) scale(.33333)">${tower('s2',false)}</g>
 <path d="M1104 327.500v16l4-3 3.500 6 3-1.500-3-6 4.500-1z" fill="#c6f000" stroke="#111" stroke-width="1.200"/></svg>`;}});

def('cad-app',class extends Base{render(){
 const rows=[['root','open','eye','bodies','Casttle 3D Model v1',107,14,20,200],['','closed','','gear','Document Settings',90,12,38,130],['','closed','','folder','Named Views',68,14,38,110],['','closed','eyeoff','folder','Origin',28,14,38,95],['','closed','eye','folder','Bodies',33,14,38,103],['','open','eye','folder','Sketches',45,14,38,115],['','','eye','skrow','Sketch1',39,14,56,107],['','','eye','skrow','Sketch2',39,14,56,107],['','','eye','skrow','Sketch3',39,14,56,107],['','closed','eye','anchor','Fish Tank 3D Model v1:1',116,14,38,183]];
 return `<style>:host{display:flex;flex-direction:column;width:1415px;height:1036px;overflow:hidden}.view{flex:1;position:relative;overflow:hidden;min-height:0}.b{position:absolute;left:2px;top:7px}.c{position:absolute;left:2px;bottom:4px}.n{position:absolute;left:640px;bottom:6px}.tree{padding-top:3px}</style>
 <cad-titlebar></cad-titlebar><cad-ribbon></cad-ribbon><div class="view"><cad-scene></cad-scene><cad-panel class="b" text="BROWSER" w="52"><div class="tree">${rows.map(r=>`<tree-row ${r[0]} twist="${r[1]}" eye="${r[2]}" icon="${r[3]}" text="${r[4]}" w="${r[5]}" gap="${r[6]}" indent="${r[7]-2}" span="${r[8]}"></tree-row>`).join('')}</div></cad-panel><cad-panel class="c" text="COMMENTS" w="57" bottom></cad-panel><cad-navbar class="n"></cad-navbar></div><cad-timeline></cad-timeline>`;}});
</script>
</body>
</html>
